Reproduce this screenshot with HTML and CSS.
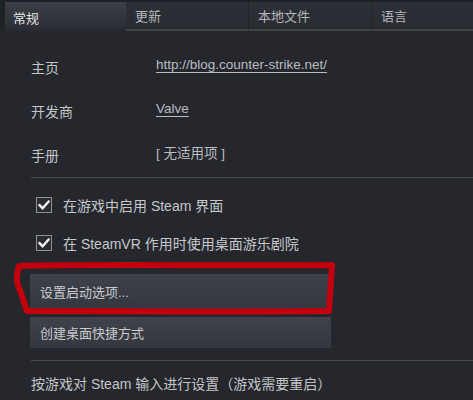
FILE: index.html
```html
<!DOCTYPE html>
<html lang="zh-CN">
<head>
  <meta charset="UTF-8">
  <title>属性 - 常规</title>
  <link rel="stylesheet" href="styles.css">
</head>
<body>
  <div class="tabs">
    <div class="tab active">常规</div>
    <div class="tab">更新</div>
    <div class="tab">本地文件</div>
    <div class="tab last">语言</div>
  </div>

  <div class="content">
    <div class="info">
      <span class="label">主页</span>
      <a class="value link" href="#">http://blog.counter-strike.net/</a>
      <span class="label">开发商</span>
      <a class="value link" href="#">Valve</a>
      <span class="label">手册</span>
      <span class="value">[ 无适用项 ]</span>
    </div>

    <div class="divider"></div>

    <label class="check">
      <span class="box">
        <svg width="12" height="10" viewBox="0 0 12 10"><path d="M1.5 5.2 L4.6 8.2 L10.6 1.6" fill="none" stroke="#f2f2f2" stroke-width="2.4" stroke-linecap="square"/></svg>
      </span>
      在游戏中启用 Steam 界面
    </label>
    <label class="check">
      <span class="box">
        <svg width="12" height="10" viewBox="0 0 12 10"><path d="M1.5 5.2 L4.6 8.2 L10.6 1.6" fill="none" stroke="#f2f2f2" stroke-width="2.4" stroke-linecap="square"/></svg>
      </span>
      在 SteamVR 作用时使用桌面游乐剧院
    </label>

    <div class="actions">
      <button class="btn first">设置启动选项...</button>
      <button class="btn">创建桌面快捷方式</button>
    </div>

    <div class="divider"></div>

    <div class="note">按游戏对 Steam 输入进行设置（游戏需要重启）</div>
  </div>

  <!-- hand-drawn highlight around the launch options button -->
  <svg class="marker" width="473" height="400" viewBox="0 0 473 400">
    <path d="M19 266 C 80 264, 220 266, 332 265 C 331 280, 330 296, 329 311 C 240 312, 120 311, 27 311 C 24 302, 22 296, 20 290 C 16 283, 16 275, 19 266 Z"
          fill="none" stroke="#c4000e" stroke-width="6" stroke-linejoin="round"/>
  </svg>
</body>
</html>
```

FILE: styles.css
```css
body {
  margin: 0;
  background: #25272c;
  font-family: "Liberation Sans", "Noto Sans CJK SC", sans-serif;
  color: #c3c5c9;
  font-size: 14px;
  position: relative;
  height: 400px;
  overflow: hidden;
}

.tabs {
  display: flex;
  padding: 2px 0 0 5px;
  background: #1f2125;
  height: 29px;
}

.tab {
  width: 123px;
  box-sizing: border-box;
  padding: 0 0 0 9px;
  display: flex;
  align-items: center;
  font-size: 13px;
  color: #b4b7bc;
  background: linear-gradient(#2c2f35, #292c31);
  border-right: 1px solid #23252a;
  border-bottom: 2px solid #40434a;
}

.tab.active {
  width: 121px;
  padding-left: 8px;
  padding-top: 2px;
  color: #e6e7e9;
  background: linear-gradient(#3c3f46, #2c2f35 85%, #282a2f);
  border-bottom: none;
  border-right: none;
}

.tab.last {
  flex: 1;
  border-right: none;
}

.content {
  padding: 14px 0 0 31px;
}

.info {
  display: grid;
  grid-template-columns: 125px 1fr;
  grid-auto-rows: 44px;
  align-items: center;
}

.value {
  font-size: 13.5px;
  color: #b9bcc1;
  padding-bottom: 6px;
}

.link {
  color: #b9bcc1;
  text-decoration: underline;
  text-underline-offset: 3px;
}

.divider {
  height: 1px;
  background: #474a51;
}

.check {
  display: flex;
  align-items: center;
  height: 38px;
  padding-left: 5px;
  gap: 11px;
  color: #c6c8cc;
}

.check:first-of-type {
  margin-top: 8px;
}

.box {
  width: 14px;
  height: 14px;
  border: 1px solid #8e9196;
  background: #2a2c31;
  display: flex;
  align-items: center;
  justify-content: center;
}

.actions {
  display: flex;
  flex-direction: column;
  gap: 8px;
  margin: 12px 0 12px -1px;
}

.btn {
  width: 301px;
  height: 31px;
  text-align: left;
  padding: 0 0 0 10px;
  border: none;
  background: linear-gradient(#3f424a, #34373d);
  color: #c8cace;
  font-family: inherit;
  font-size: 13px;
}

.btn.first {
  height: 35px;
}

.note {
  padding-top: 12px;
  color: #c3c5c9;
}

.marker {
  position: absolute;
  left: 0;
  top: 0;
  pointer-events: none;
}
```
